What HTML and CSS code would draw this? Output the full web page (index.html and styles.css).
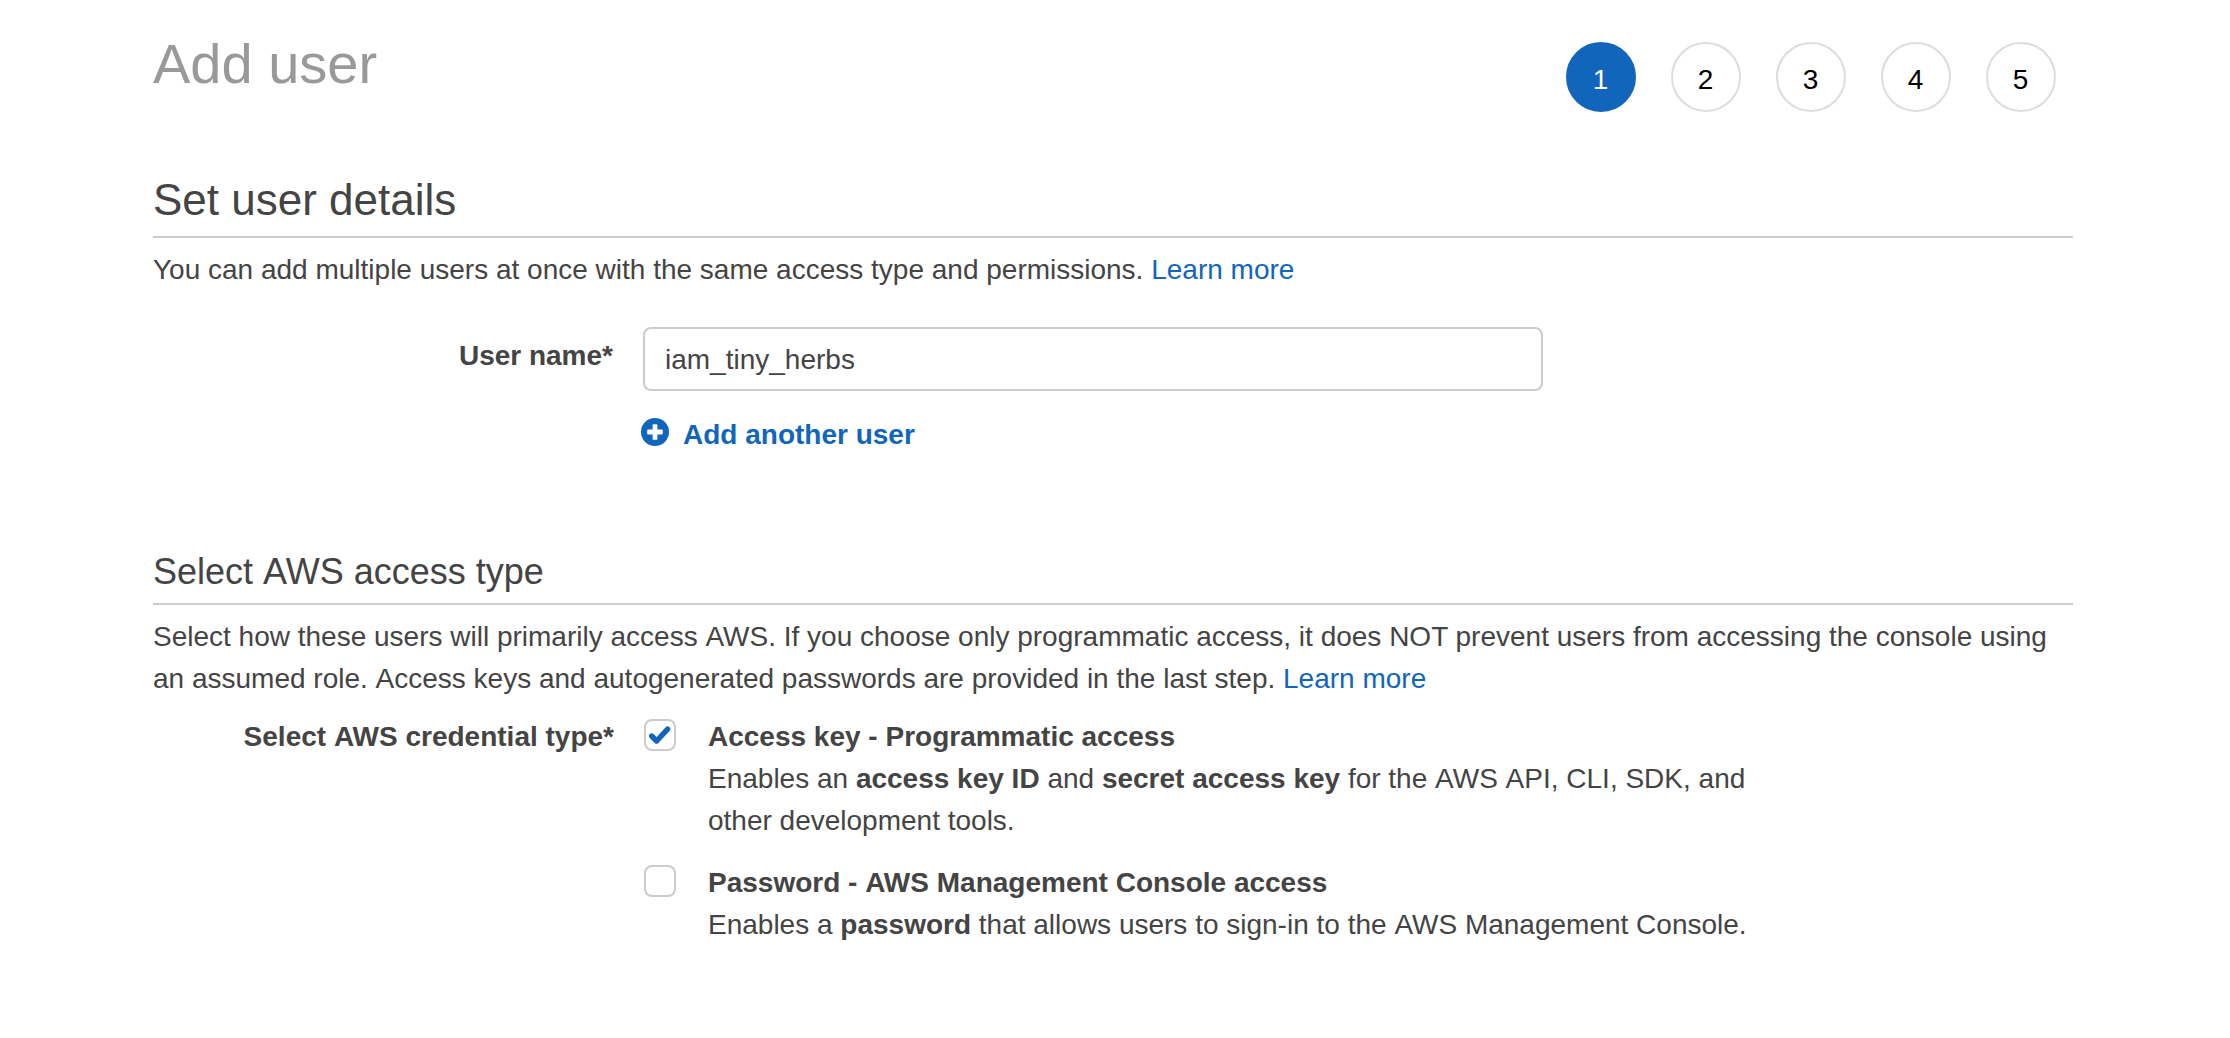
FILE: index.html
```html
<!DOCTYPE html>
<html lang="en">
<head>
<meta charset="utf-8">
<title>Add user</title>
<link rel="stylesheet" href="styles.css">
</head>
<body>
<main class="page">
  <header class="page-header">
    <h1 class="page-title">Add user</h1>
    <ol class="steps">
      <li class="step step-active">1</li>
      <li class="step">2</li>
      <li class="step">3</li>
      <li class="step">4</li>
      <li class="step">5</li>
    </ol>
  </header>

  <section class="details">
    <h2 class="section-title">Set user details</h2>
    <p class="intro">You can add multiple users at once with the same access type and permissions. <a class="link" href="#">Learn more</a></p>
    <div class="form-row user-row">
      <label class="form-label user-label" for="user-name">User name*</label>
      <div class="user-fields">
        <input class="text-input" id="user-name" type="text" value="iam_tiny_herbs">
        <a class="add-user" href="#">
          <svg class="add-icon" viewBox="0 0 28 28" aria-hidden="true">
            <circle cx="14" cy="14" r="14"/>
            <path d="M12.500 6.200h3q.900 0 .900.900v4.500h4.500q.900 0 .900.900v3q0 .900-.900.900h-4.500v4.500q0 .900-.900.900h-3q-.900 0-.900-.900v-4.500H7.100q-.900 0-.900-.900v-3q0-.900.900-.900h4.500V7.100q0-.900.900-.900z"/>
          </svg>
          <span>Add another user</span>
        </a>
      </div>
    </div>
  </section>

  <section class="access">
    <h3 class="subsection-title">Select <span class="term">AWS</span> access type</h3>
    <p class="intro">Select how these users will primarily access <span class="term">AWS</span>. If you choose only programmatic access, it does NOT prevent users from accessing the console using an assumed role. <span class="term">Access</span> keys and autogenerated passwords are provided in the last step. <a class="link" href="#">Learn more</a></p>
    <div class="form-row credential-row">
      <span class="form-label">Select <span class="term">AWS</span> credential type*</span>
      <div class="options">
        <label class="option">
          <span class="checkbox">
            <svg class="check-icon" viewBox="0 0 28 28" aria-hidden="true"><path d="M5.700 15l4.900 5L21.600 8.100"/></svg>
          </span>
          <span class="option-text"><b>Access key - Programmatic access</b><br>Enables an <b>access key ID</b> and <b>secret access key</b> for the <span class="term">AWS</span> <span class="term">API</span>, CLI, SDK, and other development tools.</span>
        </label>
        <label class="option">
          <span class="checkbox"></span>
          <span class="option-text"><b>Password - <span class="term">AWS</span> Management Console access</b><br>Enables a <b>password</b> that allows users to sign-in to the <span class="term">AWS</span> Management Console.</span>
        </label>
      </div>
    </div>
  </section>
</main>
</body>
</html>
```

FILE: styles.css
```css
* {
  box-sizing: border-box;
}

body {
  margin: 0;
  background: #fff;
  color: #444;
  font: 28px/42px "Liberation Sans", Arial, sans-serif;
}

h1,
h2,
h3,
p,
ol {
  margin: 0;
  padding: 0;
  font-weight: normal;
}

.page {
  width: 1920px;
  margin-left: 153px;
}

.page-header {
  display: flex;
  justify-content: space-between;
  align-items: flex-start;
  height: 175px;
  padding: 32px 17px 0 0;
}

.page-title {
  color: #999;
  font-size: 56px;
  line-height: 64px;
}

.steps {
  display: flex;
  gap: 35px;
  margin-top: 10px;
  list-style: none;
}

.step {
  width: 70px;
  height: 70px;
  padding: 15px 1px 0 0;
  border: 2px solid #ddd;
  border-radius: 50%;
  color: #000;
  text-align: center;
}

.step-active {
  border-color: #1166bb;
  background: #1166bb;
  color: #fff;
}

.section-title {
  padding-bottom: 11px;
  border-bottom: 2px solid #ccc;
  font-size: 44px;
  line-height: 50px;
}

.subsection-title {
  padding-bottom: 10px;
  border-bottom: 2px solid #ccc;
  font-size: 36px;
  line-height: 42px;
}

.intro {
  padding-top: 11px;
}

/* A hairline margin stops the space from kerning into a capital A. */
.term {
  margin-left: 0.02px;
}

.link,
.add-user {
  color: #1166bb;
  text-decoration: none;
}

.form-row {
  display: grid;
  grid-template-columns: 461px 1fr;
}

.form-label {
  font-weight: bold;
  text-align: right;
}

.user-row {
  column-gap: 29px;
  margin-top: 36px;
}

.user-label {
  padding: 8px 1px 0 0;
}

.text-input {
  display: block;
  width: 900px;
  height: 64px;
  padding: 2px 20px 0;
  border: 2px solid #ccc;
  border-radius: 8px;
  outline: 0;
  background: #fff;
  color: #444;
  font: inherit;
}

.add-user {
  display: flex;
  gap: 14px;
  width: max-content;
  margin: 23px 0 0 -2px;
  font-weight: bold;
}

.add-icon {
  width: 28px;
  height: 28px;
  margin-top: 4px;
  fill: #1166bb;
}

.add-icon path {
  fill: #fff;
}

.access {
  margin-top: 95px;
}

.credential-row {
  column-gap: 30px;
  margin-top: 16px;
}

.options {
  display: grid;
  row-gap: 20px;
}

.option {
  display: grid;
  grid-template-columns: 32px 1050px;
  column-gap: 32px;
}

.checkbox {
  width: 32px;
  height: 32px;
  margin-top: 3px;
  border: 2px solid #ccc;
  border-radius: 8px;
}

.check-icon {
  display: block;
  width: 28px;
  height: 28px;
  fill: none;
  stroke: #1166bb;
  stroke-width: 5.400;
  stroke-linecap: round;
  stroke-linejoin: round;
}
```
